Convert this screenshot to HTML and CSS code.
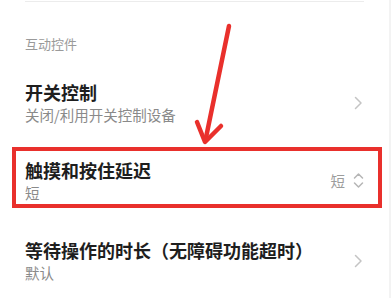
FILE: index.html
```html
<!DOCTYPE html>
<html lang="zh-CN">
<head>
  <meta charset="UTF-8" />
  <meta name="viewport" content="width=device-width, initial-scale=1.0"/>
  <title>无障碍 - 互动控件</title>
  <link rel="stylesheet" href="styles.css">
</head>
<body>

  <div class="screen">
    <div class="divider"></div>

    <div class="section-title">互动控件</div>

    <div class="row">
      <div class="row-text">
        <div class="row-title">开关控制</div>
        <div class="row-sub">关闭/利用开关控制设备</div>
      </div>
      <svg class="chevron" width="9" height="14" viewBox="0 0 9 14">
        <path d="M1.5 1.5 L7 7 L1.5 12.5" fill="none" stroke="#c4c4c4" stroke-width="1.5" stroke-linecap="round" stroke-linejoin="round"/>
      </svg>
    </div>

    <div class="row">
      <div class="row-text">
        <div class="row-title">触摸和按住延迟</div>
        <div class="row-sub">短</div>
      </div>
      <div class="row-value">
        <span>短</span>
        <svg class="updown" width="11" height="17" viewBox="0 0 11 17">
          <path d="M1.5 6 L5.5 2 L9.5 6" fill="none" stroke="#b5b5b5" stroke-width="1.5" stroke-linecap="round" stroke-linejoin="round"/>
          <path d="M1.5 11 L5.5 15 L9.5 11" fill="none" stroke="#b5b5b5" stroke-width="1.5" stroke-linecap="round" stroke-linejoin="round"/>
        </svg>
      </div>
    </div>

    <div class="row row-last">
      <div class="row-text">
        <div class="row-title">等待操作的时长（无障碍功能超时）</div>
        <div class="row-sub">默认</div>
      </div>
      <svg class="chevron" width="9" height="14" viewBox="0 0 9 14">
        <path d="M1.5 1.5 L7 7 L1.5 12.5" fill="none" stroke="#c4c4c4" stroke-width="1.5" stroke-linecap="round" stroke-linejoin="round"/>
      </svg>
    </div>

    <!-- annotation overlays -->
    <div class="highlight"></div>
    <svg class="arrow" width="391" height="298" viewBox="0 0 391 298">
      <path d="M229 26 L205.5 140" fill="none" stroke="#e9302c" stroke-width="4.5" stroke-linecap="round"/>
      <path d="M197 122 L205 142 L221 126" fill="none" stroke="#e9302c" stroke-width="4.5" stroke-linecap="round" stroke-linejoin="round"/>
    </svg>
  </div>

</body>
</html>
```

FILE: styles.css
```css
body {
  margin: 0;
  background: #fff;
  font-family: "Noto Sans CJK SC", "Noto Sans", sans-serif;
}
.screen {
  position: relative;
  width: 391px;
  height: 298px;
  overflow: hidden;
  box-sizing: border-box;
  border-right: 2px solid #f3f3f3;
}
.divider {
  margin: 1px 25px 0;
  border-top: 1px solid #ececec;
}
.section-title {
  padding: 33px 25px 11px;
  font-size: 13px;
  line-height: 18px;
  color: #9a9a9a;
}
.row {
  display: flex;
  align-items: center;
  justify-content: space-between;
  padding: 16px 25px 17px 25px;
}
.row-last {
  margin-top: 2px;
}
.row-title {
  font-size: 18px;
  line-height: 24px;
  font-weight: bold;
  color: #1e1e1e;
}
.row-sub {
  margin-top: 1px;
  font-size: 14.5px;
  line-height: 20px;
  color: #8a8a8a;
}
.chevron {
  margin-right: 1px;
}
.row-value {
  display: flex;
  align-items: center;
  gap: 8px;
  font-size: 14.5px;
  color: #9c9c9c;
}
.highlight {
  position: absolute;
  left: 12px;
  top: 147px;
  width: 370px;
  height: 61px;
  box-sizing: border-box;
  border: 4px solid #e9302c;
}
.arrow {
  position: absolute;
  left: 0;
  top: 0;
}
```
